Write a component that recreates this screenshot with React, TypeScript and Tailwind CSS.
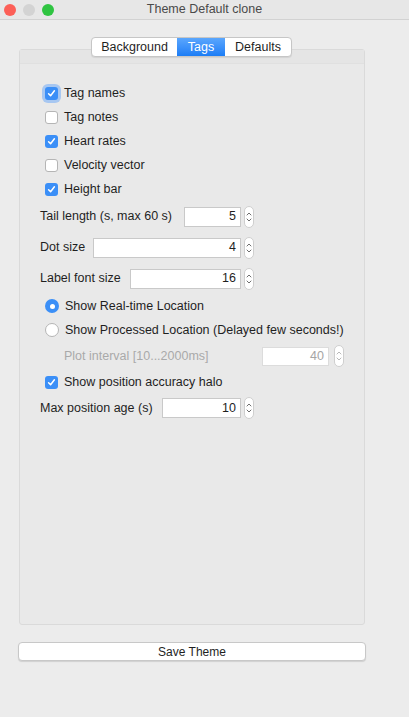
import React from 'react';

const font = { fontFamily: '"Liberation Sans", Arial, sans-serif' };

const CheckBox = ({ checked, focus }: { checked?: boolean; focus?: boolean }) => (
  <span
    className={
      'flex h-[13px] w-[13px] shrink-0 items-center justify-center rounded-[3px] ' +
      (checked ? 'bg-[#3b8ff7] ' : 'border border-[#b5b5b5] bg-white ') +
      (focus ? 'ring-[3px] ring-[#8ab8f3]/70' : '')
    }
  >
    {checked && (
      <svg width="9" height="9" viewBox="0 0 9 9">
        <path d="M1.6 4.8 L3.6 6.8 L7.4 1.8" fill="none" stroke="white" strokeWidth="1.5" strokeLinecap="round" strokeLinejoin="round" />
      </svg>
    )}
  </span>
);

const Radio = ({ checked }: { checked?: boolean }) => (
  <span
    className={
      'flex h-[14px] w-[14px] shrink-0 items-center justify-center rounded-full ' +
      (checked ? 'bg-[#3b8ff7]' : 'border border-[#b5b5b5] bg-white')
    }
  >
    {checked && <span className="h-[5px] w-[5px] rounded-full bg-white" />}
  </span>
);

const Spinner = ({ disabled }: { disabled?: boolean }) => (
  <span className="ml-[3px] flex h-[22px] w-[10px] shrink-0 items-center justify-center rounded-full border border-[#cfcfcf] bg-white">
    <svg width="6" height="14" viewBox="0 0 6 14">
      <path
        d="M1 5 L3 3 L5 5 M1 9 L3 11 L5 9"
        fill="none"
        stroke={disabled ? '#b8b8b8' : '#6e6e6e'}
        strokeWidth="1"
        strokeLinecap="round"
        strokeLinejoin="round"
      />
    </svg>
  </span>
);

// input widths are fixed per row, as in the dialog
const NumberField = ({ label, value, width, h = 'h-[31px]' }: { label: string; value: string; width: string; h?: string }) => (
  <div className={'flex w-[214px] items-center ' + h}>
    <span className="shrink-0 text-[12.5px] text-[#1f1f1f]">{label}</span>
    <span className={'ml-auto flex h-[20px] items-center justify-end border border-[#c9c9c9] bg-white pr-[4px] text-[12.5px] text-[#1f1f1f] ' + width}>
      {value}
    </span>
    <Spinner />
  </div>
);

const CheckRow = ({ label, checked, focus }: { label: string; checked?: boolean; focus?: boolean }) => (
  <div className="flex h-6 items-center gap-[6px] pl-[5px]">
    <CheckBox checked={checked} focus={focus} />
    <span className="text-[12.5px] text-[#1f1f1f]">{label}</span>
  </div>
);

const App = () => {
  return (
    <div className="flex h-[717px] w-[409px] flex-col bg-[#ececec]" style={font}>
      {/* Title bar */}
      <div className="relative flex h-[20px] items-center justify-center border-b border-[#d2d2d2] bg-[#e7e7e7]">
        <div className="absolute left-[4px] top-[4px] flex gap-[7px]">
          <span className="h-[12px] w-[12px] rounded-full bg-[#fc5f57]" />
          <span className="h-[12px] w-[12px] rounded-full bg-[#d3d3d3]" />
          <span className="h-[12px] w-[12px] rounded-full bg-[#2fc441]" />
        </div>
        <span className="text-[12.5px] text-[#4a4a4a]">Theme Default clone</span>
      </div>

      {/* Tabs */}
      <div className="relative z-10 mt-[17px] flex justify-center pr-[26px]">
        <div className="flex h-[20px] overflow-hidden rounded-[4px] border border-[#c6c6c6] bg-white text-[12.5px] shadow-[0_1px_1px_rgba(0,0,0,0.08)]">
          <span className="flex w-[85px] items-center justify-center text-[#1f1f1f]">Background</span>
          <span className="flex w-[48px] items-center justify-center bg-gradient-to-b from-[#5aa6fd] to-[#1a7df6] text-white">Tags</span>
          <span className="flex w-[66px] items-center justify-center text-[#1f1f1f]">Defaults</span>
        </div>
      </div>

      {/* Panel */}
      <div className="ml-[19px] -mt-[8px] flex h-[576px] w-[346px] flex-col rounded-[3px] border border-[#dadada] bg-[#e9e9e9]">
        <div className="h-[14px] border-b border-[#e0e0e0] bg-[#e5e5e5]" />
        <div className="flex flex-col pl-[20px] pt-[17px]">
          <CheckRow label="Tag names" checked focus />
          <CheckRow label="Tag notes" />
          <CheckRow label="Heart rates" checked />
          <CheckRow label="Velocity vector" />
          <CheckRow label="Height bar" checked />

          <NumberField label="Tail length (s, max 60 s)" value="5" width="w-[57px]" />
          <NumberField label="Dot size" value="4" width="w-[148px]" />
          <NumberField label="Label font size" value="16" width="w-[111px]" />

          <div className="flex h-6 items-center gap-[6px] pl-[5px]">
            <Radio checked />
            <span className="text-[12.5px] text-[#1f1f1f]">Show Real-time Location</span>
          </div>
          <div className="flex h-6 items-center gap-[6px] pl-[5px]">
            <Radio />
            <span className="text-[12.5px] text-[#1f1f1f]">Show Processed Location (Delayed few seconds!)</span>
          </div>
          <div className="flex h-[28px] items-center pl-[24px]">
            <span className="text-[12.5px] text-[#a9a9a9]">Plot interval [10...2000ms]</span>
            <span className="ml-auto flex h-[19px] w-[67px] items-center justify-end border border-[#dcdcdc] bg-white pr-[4px] text-[12.5px] text-[#a5a5a5]">
              40
            </span>
            <span className="mr-[20px] ml-[2px] flex">
              <Spinner disabled />
            </span>
          </div>
          <CheckRow label="Show position accuracy halo" checked />
          <NumberField label="Max position age (s)" value="10" width="w-[79px]" h="h-[28px]" />
        </div>
      </div>

      {/* Save */}
      <button className="ml-[18px] mt-[17px] flex h-[19px] w-[348px] items-center justify-center rounded-[4px] border border-[#c8c8c8] bg-white text-[12px] text-[#1f1f1f] shadow-[0_1px_1px_rgba(0,0,0,0.12)]">
        Save Theme
      </button>
    </div>
  );
};

export default App;
